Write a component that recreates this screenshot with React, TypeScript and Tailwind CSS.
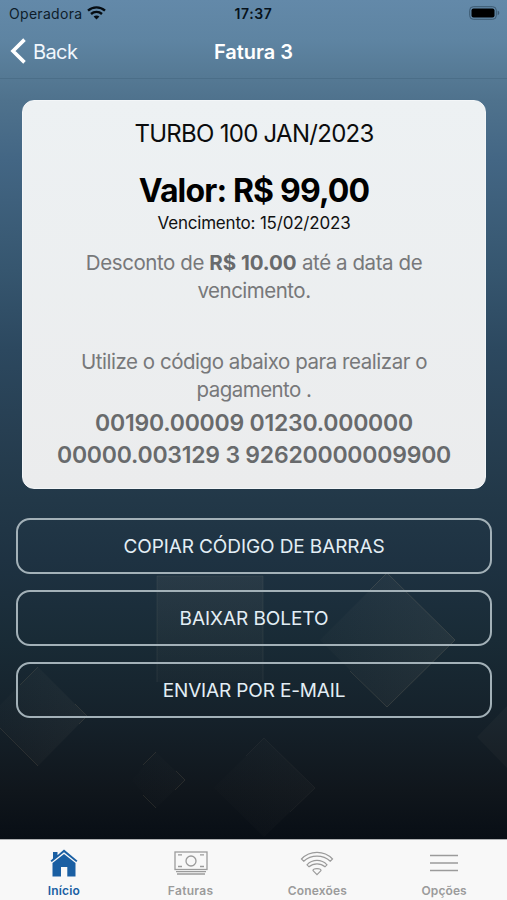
import React from 'react';

const TabItem: React.FC<{ label: string; active?: boolean; labelClass: string; children: React.ReactNode }> = ({
  label,
  active,
  labelClass,
  children,
}) => (
  <button className={`flex flex-col items-center pt-[5px] pl-px ${active ? 'text-[#1a5fa3]' : 'text-[#9b9b9b]'}`}>
    <span className="h-[36px] flex items-center justify-center">{children}</span>
    <span className={`text-xs leading-[18px] mt-[1px] font-semibold whitespace-nowrap ${labelClass}`}>{label}</span>
  </button>
);

const ActionButton: React.FC<{ label: string; labelClass: string }> = ({ label, labelClass }) => (
  <button className="h-[56px] w-full flex items-center justify-center rounded-[14px] border-2 border-[#a3b1b8] text-[#e3eef5] text-[19px] whitespace-nowrap pt-[3px]">
    <span className={labelClass}>{label}</span>
  </button>
);

const BackgroundShapes: React.FC = () => (
  <svg className="absolute inset-0 w-full h-full" viewBox="0 0 507 900" fill="none">
    <defs>
      <linearGradient id="warm" x1="0" y1="0" x2="0" y2="1">
        <stop offset="0" stopColor="#b3aa98" stopOpacity="0.08" />
        <stop offset="1" stopColor="#b3a088" stopOpacity="0.02" />
      </linearGradient>
      <linearGradient id="fadeLeft" x1="0" y1="0" x2="1" y2="0">
        <stop offset="0" stopColor="#b3aa98" stopOpacity="0.02" />
        <stop offset="1" stopColor="#b3aa98" stopOpacity="0.08" />
      </linearGradient>
    </defs>
    <path d="M157 576H263V682H157Z" fill="url(#warm)" />
    <path d="M157 682V576H263V682" stroke="#a9a294" strokeOpacity="0.11" />
    <path d="M387 573L455 640L387 707L320 640Z" fill="url(#fadeLeft)" />
    <path d="M370 590L387 573M387 573L455 640L387 707L350 671" stroke="#b5a687" strokeOpacity="0.17" />
    <path d="M38 667L87 716L38 766L-11 716Z" fill="url(#fadeLeft)" opacity="0.7" />
    <path d="M20 685L38 667M75 704L87 716L79 724M38 766L-2 726" stroke="#b09a78" strokeOpacity="0.15" />
    <path d="M156 752L185 780L156 808L132 780Z" fill="url(#fadeLeft)" opacity="0.25" />
    <path d="M143 765L156 752M176 771L185 780L175 790M156 808L143 795" stroke="#b09a78" strokeOpacity="0.15" />
    <path d="M264 738L315 788L264 837L214 788Z" fill="url(#fadeLeft)" opacity="0.4" />
    <path d="M246 756L264 738M264 738L315 788L290 812" stroke="#a9a294" strokeOpacity="0.07" />
    <path d="M507 706L477 737L507 768Z" fill="#b3aa98" fillOpacity="0.04" />
  </svg>
);

export default function App() {
  return (
    <div className="relative w-[507px] h-[900px] overflow-hidden font-['Inter','Liberation_Sans',sans-serif] bg-[linear-gradient(to_bottom,#6389a9_0px,#5e84a2_40px,#557994_77px,#4f728d_100px,#436684_160px,#36566f_270px,#2c485f_350px,#273f52_430px,#223848_500px,#1e3242_560px,#192b36_640px,#15212a_720px,#10161c_790px,#080e15_840px)]">
      <BackgroundShapes />
      <div className="relative flex flex-col h-full">
        {/* Status bar */}
        <div className="h-[27px] grid grid-cols-3 items-center px-[9px] text-sm text-[#0e1d2a]">
          <div className="flex items-center gap-[5px]">
            <span className="tracking-[0.3px] pt-px">Operadora</span>
            <svg className="mb-px" width="19" height="14" viewBox="0 0 19 14" fill="none" stroke="#050c12" strokeWidth="2.4">
              <path d="M1 4.6C5.8 0.3 13.2 0.3 18 4.6" />
              <path d="M4 8C7.1 5.2 11.9 5.2 15 8" />
              <path d="M9.5 13.4L6.6 10.5C8.2 9 10.8 9 12.4 10.5Z" fill="#050c12" stroke="none" />
            </svg>
          </div>
          <span className="text-center font-semibold text-[#07121b] tracking-[0.6px]">17:37</span>
          <svg className="justify-self-end mr-[-2px] mb-[2px]" width="31" height="14" viewBox="0 0 31 14">
            <rect x="0.7" y="0.7" width="26.6" height="12.6" rx="3.6" fill="none" stroke="#3c5971" />
            <rect x="2.5" y="2.5" width="23" height="9" rx="2" fill="#000" />
            <path d="M28.7 4.8C30.8 5.4 30.8 8.6 28.7 9.2Z" fill="#3c5971" />
          </svg>
        </div>

        {/* Navigation */}
        <div className="h-[52px] grid grid-cols-3 items-center px-[10px] pb-px border-b border-[#4b6e88] text-white text-xl">
          <button className="flex items-center gap-[7px] text-[#f0f7fd]">
            <svg className="mb-[2px]" width="16" height="26" viewBox="0 0 16 26" fill="none" stroke="white" strokeWidth="3.6">
              <path d="M14.5 1.6L3 13L14.5 24.4" />
            </svg>
            <span className="tracking-[-0.6px]">Back</span>
          </button>
          <h1 className="text-center font-semibold">Fatura 3</h1>
        </div>

        {/* Invoice */}
        <div className="ml-[22px] mr-[21px] mt-[21px] h-[389px] rounded-xl bg-linear-to-b from-[#edf1f3] to-[#ebeced] border border-[#f3f6f8] text-center text-[#77787a] text-[20.5px] leading-[28px] whitespace-nowrap">
          <h2 className="mt-[16px] text-2xl leading-[34px] text-[#0b0c0d] tracking-[-0.72px]">TURBO 100 JAN/2023</h2>
          <p className="mt-[20px] text-[32px] leading-[40px] font-bold text-black tracking-[-0.85px]">Valor: R$ 99,00</p>
          <p className="text-[17px] leading-[24px] text-[#111] tracking-[-0.2px]">Vencimento: 15/02/2023</p>
          <p className="mt-[14px]">
            <span className="tracking-[-0.42px]">
              Desconto de <b className="text-[#686a6c] tracking-[-0.05px]">R$ 10.00</b> até a data de
            </span>
            <br />
            <span className="tracking-[-0.5px]">vencimento.</span>
          </p>
          <p className="mt-[43px]">
            <span className="tracking-[-0.46px]">Utilize o código abaixo para realizar o</span>
            <br />
            <span className="tracking-[-0.55px]">pagamento .</span>
          </p>
          <p className="mt-[3px] text-[23px] leading-[32px] font-semibold text-[#686a6c] tracking-[-0.23px]">
            00190.00009 01230.000000
            <br />
            00000.003129 3 92620000009900
          </p>
        </div>

        {/* Actions */}
        <div className="mt-[29px] ml-4 mr-[15px] flex flex-col gap-4">
          <ActionButton label="COPIAR CÓDIGO DE BARRAS" labelClass="tracking-[-0.1px]" />
          <ActionButton label="BAIXAR BOLETO" labelClass="tracking-[-0.05px]" />
          <ActionButton label="ENVIAR POR E-MAIL" labelClass="tracking-[-0.15px]" />
        </div>

        {/* Tab bar */}
        <div className="mt-auto h-[61px] grid grid-cols-4 bg-[#f8f8f8] border-t border-[#aeb0b2]">
          <TabItem label="Início" active labelClass="tracking-[0.2px]">
            <svg width="28" height="28" viewBox="0 0 28 28" fill="currentColor">
              <path d="M3 3H7.5V6.2L14 0.6L27.5 11.7L26.2 13L14 3.2L1.8 13L0.5 11.7L3 9.6Z" />
              <path d="M14 4.9L25.5 14V27.5H17.3V18H11V27.5H2.5V14Z" />
            </svg>
          </TabItem>
          <TabItem label="Faturas" labelClass="tracking-[0.3px]">
            <svg width="34" height="26" viewBox="0 0 34 26" fill="none" stroke="currentColor" strokeWidth="1.3">
              <rect x="1" y="2" width="32" height="17.5" />
              <circle cx="17" cy="11" r="5" />
              <path d="M4 4.8H8M26 4.8H30M4 16.5H8M26 16.5H30M2 21.7H32M3 24H31" />
            </svg>
          </TabItem>
          <TabItem label="Conexões" labelClass="tracking-[0.15px]">
            <svg width="34" height="26" viewBox="0 0 34 26" fill="none" stroke="currentColor" strokeWidth="1.2">
              <path d="M1.5 9C10 0.2 24 0.2 32.5 9L30.3 11.2C23 4.4 11 4.4 3.7 11.2Z" />
              <path d="M7 14.8C12.5 9 21.5 9 27 14.8L25 16.8C20.5 12.8 13.5 12.8 9 16.8Z" />
              <path d="M13 20.6C13 18 21 18 21 20.6L17 24.7Z" />
            </svg>
          </TabItem>
          <TabItem label="Opções" labelClass="tracking-[0.1px]">
            <svg width="28" height="20" viewBox="0 0 28 20" stroke="currentColor" strokeWidth="1.6">
              <path d="M0 2.5H28M0 10H28M0 17.5H28" />
            </svg>
          </TabItem>
        </div>
      </div>
    </div>
  );
}
